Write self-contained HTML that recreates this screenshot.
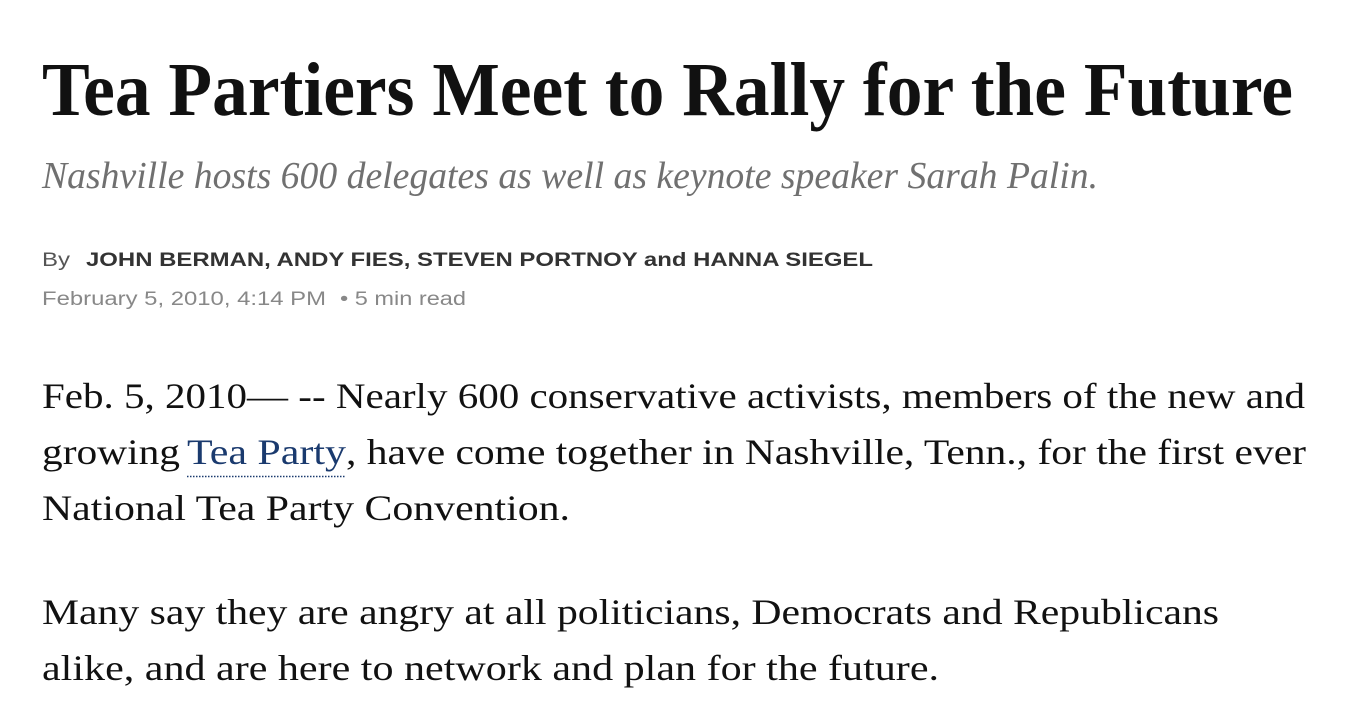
<!DOCTYPE html>
<html><head><meta charset="utf-8"><style>
html,body{margin:0;padding:0;background:#fff;width:1370px;height:722px;overflow:hidden}
svg{display:block}
.s{font-family:"Liberation Serif",serif}
.a{font-family:"Liberation Sans",sans-serif}
</style></head><body>
<svg width="1370" height="722" xmlns="http://www.w3.org/2000/svg">
<text class="s" x="42" y="115" font-size="76" font-weight="bold" fill="#111" textLength="1251" lengthAdjust="spacingAndGlyphs">Tea Partiers Meet to Rally for the Future</text>
<text class="s" x="42" y="188" font-size="38" font-style="italic" fill="#707070" textLength="1056" lengthAdjust="spacingAndGlyphs">Nashville hosts 600 delegates as well as keynote speaker Sarah Palin.</text>
<text class="a" x="42" y="266" font-size="19" fill="#555" textLength="28" lengthAdjust="spacingAndGlyphs">By</text>
<text class="a" x="86" y="266" font-size="19" font-weight="bold" fill="#333" textLength="787" lengthAdjust="spacingAndGlyphs">JOHN BERMAN, ANDY FIES, STEVEN PORTNOY and HANNA SIEGEL</text>
<text class="a" x="42" y="305" font-size="19" fill="#888" textLength="284" lengthAdjust="spacingAndGlyphs">February 5, 2010, 4:14 PM</text>
<text class="a" x="340" y="305" font-size="19" fill="#888" textLength="126" lengthAdjust="spacingAndGlyphs">• 5 min read</text>
<g class="s" font-size="36" fill="#111">
<text x="42" y="408" textLength="1263" lengthAdjust="spacingAndGlyphs">Feb. 5, 2010— -- Nearly 600 conservative activists, members of the new and</text>
<text x="42" y="464" textLength="138" lengthAdjust="spacingAndGlyphs">growing</text>
<text x="187" y="464" fill="#1a3a6e" textLength="159" lengthAdjust="spacingAndGlyphs">Tea Party</text>
<text x="346" y="464" textLength="960" lengthAdjust="spacingAndGlyphs">, have come together in Nashville, Tenn., for the first ever</text>
<text x="42" y="520" textLength="528" lengthAdjust="spacingAndGlyphs">National Tea Party Convention.</text>
<text x="42" y="624" textLength="1177" lengthAdjust="spacingAndGlyphs">Many say they are angry at all politicians, Democrats and Republicans</text>
<text x="42" y="680" textLength="897" lengthAdjust="spacingAndGlyphs">alike, and are here to network and plan for the future.</text>
</g>
<line x1="187" y1="476.5" x2="346" y2="476.5" stroke="#1a3a6e" stroke-width="1.5" stroke-dasharray="1.5,1.5"/>
</svg>
</body></html>
